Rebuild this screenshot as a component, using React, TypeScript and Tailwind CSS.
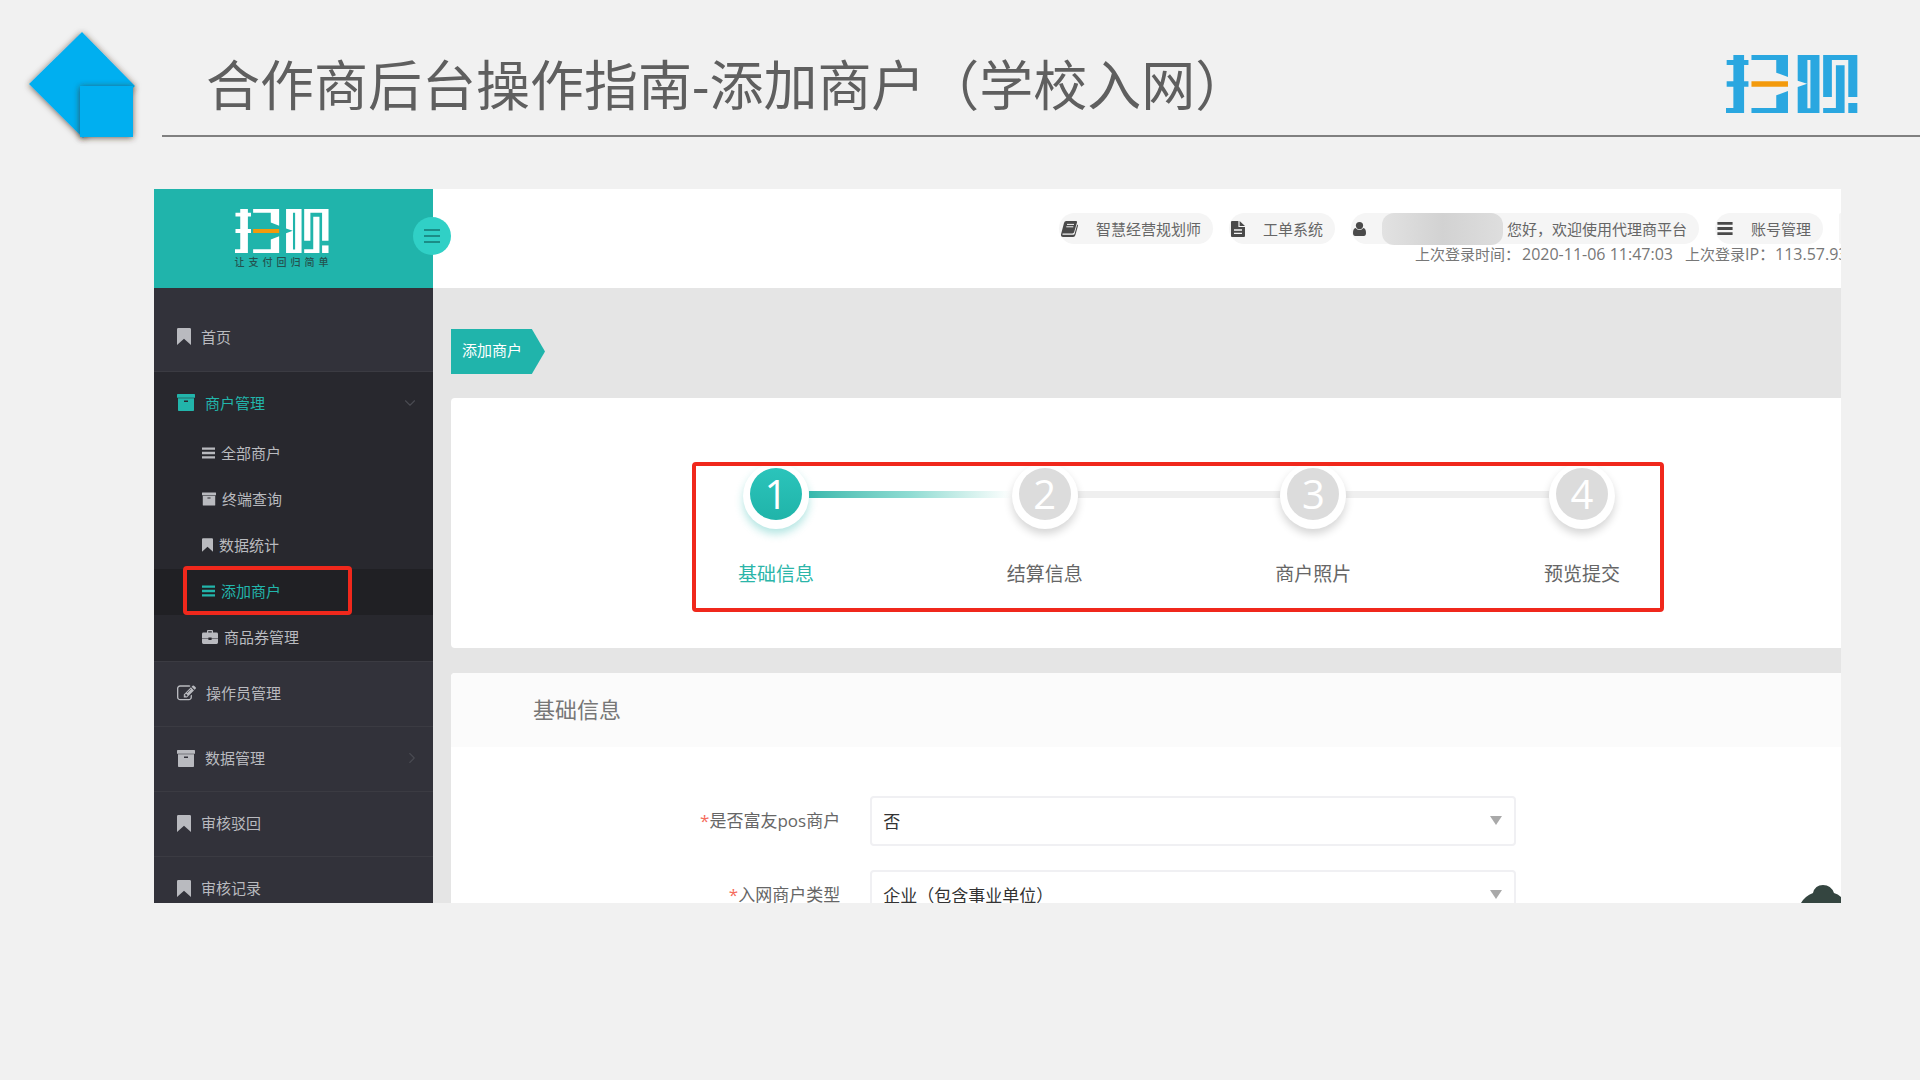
import { useState } from "react";
import type { ReactNode } from "react";
import { ChevronDown, ChevronRight } from "lucide-react";
import clsx from "clsx";

type IconProps = { className?: string };

function Logo({ className }: IconProps) {
  return (
    <svg viewBox="0 0 394 174" preserveAspectRatio="none" className={className} role="img" aria-label="扫呗">
      <g fill="currentColor">
        <path d="M22 0H54V15H67V30H54V79H67V95H54V174H0V159H22V95H2V79H22V30H2V15H22Z" />
        <path d="M76 0H185V66L150 53V15H76Z" />
        <path d="M185 108V174H76V159H150V121Z" />
        <path
          fillRule="evenodd"
          d="M214 0H279V174H214V96L242 86L214 77ZM243 15V160H252V15Z"
        />
        <path d="M290 0H392V126H365V15H316V126H290Z" />
        <path d="M328 31H354V174H290V159H328Z" />
        <path d="M365 144H392V174H365Z" />
      </g>
      <path fill="#f39a0c" d="M76 79H185V95H76Z" />
    </svg>
  );
}

function BookmarkIcon({ className }: IconProps) {
  return (
    <svg viewBox="0 0 14 17" fill="currentColor" className={className} aria-hidden="true">
      <path d="M1.3 0H12.7Q14 0 14 1.3V17L7 10.8L0 17V1.3Q0 0 1.3 0Z" />
    </svg>
  );
}

function ArchiveIcon({ className }: IconProps) {
  return (
    <svg viewBox="0 0 18 17" fill="currentColor" className={className} aria-hidden="true">
      <path d="M.6 0H17.4Q18 0 18 .6V3.8H0V.6Q0 0 .6 0Z" />
      <path
        fillRule="evenodd"
        d="M1 4.2H17V16.2Q17 17 16.2 17H1.8Q1 17 1 16.2ZM7 6.6V8H11V6.6Z"
      />
    </svg>
  );
}

function BarsIcon({ className }: IconProps) {
  return (
    <svg viewBox="0 0 14 12" fill="currentColor" className={className} aria-hidden="true">
      <path d="M0 0H14V2.6H0ZM0 4.7H14V7.3H0ZM0 9.4H14V12H0Z" />
    </svg>
  );
}

function BriefcaseIcon({ className }: IconProps) {
  return (
    <svg viewBox="0 0 16 14" fill="currentColor" className={className} aria-hidden="true">
      <path
        fillRule="evenodd"
        d="M5 2.6V1Q5 0 6 0H10Q11 0 11 1V2.6H14.6Q16 2.6 16 4V8.4H9.6V7.6H6.4V8.4H0V4Q0 2.6 1.4 2.6ZM6.2 1.2V2.6H9.8V1.2Z"
      />
      <path d="M0 9H6.4V10H9.6V9H16V12.6Q16 14 14.6 14H1.4Q0 14 0 12.6Z" />
    </svg>
  );
}

function EditIcon({ className }: IconProps) {
  return (
    <svg viewBox="0 128 1792 1450" fill="currentColor" className={className} aria-hidden="true">
      <path d="M888 1184l116-116-152-152-116 116v56h96v96h56zm440-720q-16-16-33 1l-350 350q-17 17-1 33t33-1l350-350q17-17 1-33zm80 594v190q0 119-84.5 203.5t-203.5 84.5h-832q-119 0-203.5-84.5t-84.5-203.5v-832q0-119 84.5-203.5t203.5-84.5h832q63 0 117 25 15 7 18 23 3 17-9 29l-49 49q-14 14-32 8-23-6-45-6h-832q-66 0-113 47t-47 113v832q0 66 47 113t113 47h832q66 0 113-47t47-113v-126q0-13 9-22l64-64q15-15 35-7t20 29zm-96-738l288 288-672 672h-288v-288zm444 132l-92 92-288-288 92-92q28-28 68-28t68 28l152 152q28 28 28 68t-28 68z" />
    </svg>
  );
}

function BookIcon({ className }: IconProps) {
  return (
    <svg viewBox="0 0 17 16" className={className} aria-hidden="true">
      <path fill="currentColor" d="M5.2 0H15Q16.4 0 16 1.5L13.2 11Q12.8 12.4 11.4 12.4H1.6Q1 13.8 2.2 13.8H12.4Q13.3 13.8 13.6 12.8L16.2 3.4Q17.2 3.8 16.9 5L14.4 14Q13.9 16 12.2 16H2.4Q-.6 16 .1 13L3 2Q3.5 0 5.2 0Z" />
      <path stroke="#f5f5f5" strokeWidth="1" d="M6 3.4H13M5.3 5.8H12.3" />
    </svg>
  );
}

function FileIcon({ className }: IconProps) {
  return (
    <svg viewBox="0 0 14 16" className={className} aria-hidden="true">
      <path fill="currentColor" d="M0 1Q0 0 1 0H7.4V6H14V15Q14 16 13 16H1Q0 16 0 15ZM8.6 0L14 4.9H8.6Z" />
      <path stroke="#f5f5f5" strokeWidth="1.3" d="M3 9H11M3 12.4H11" />
    </svg>
  );
}

function UserIcon({ className }: IconProps) {
  return (
    <svg viewBox="0 0 13 14" fill="currentColor" className={className} aria-hidden="true">
      <circle cx="6.5" cy="3.6" r="3.6" />
      <path d="M2.6 6Q4 8 6.5 8T10.4 6Q13 6.6 13 11Q13 14 10.8 14H2.2Q0 14 0 11Q0 6.6 2.6 6Z" />
    </svg>
  );
}

const SUB_MENU = [
  { label: "全部商户", icon: <BarsIcon className="h-3 w-[13px]" /> },
  { label: "终端查询", icon: <ArchiveIcon className="h-[14px] w-[14px]" /> },
  { label: "数据统计", icon: <BookmarkIcon className="h-[14px] w-[11px]" /> },
  { label: "添加商户", icon: <BarsIcon className="h-3 w-[13px]" />, marked: true },
  { label: "商品券管理", icon: <BriefcaseIcon className="h-[14px] w-4" /> },
];

const LOWER_MENU = [
  { label: "操作员管理", icon: <EditIcon className="h-4 w-[19px]" /> },
  { label: "数据管理", icon: <ArchiveIcon className="h-[17px] w-[18px]" />, arrow: true },
  { label: "审核驳回", icon: <BookmarkIcon className="h-[17px] w-[14px]" /> },
  { label: "审核记录", icon: <BookmarkIcon className="h-[17px] w-[14px]" /> },
];

const STEPS = ["基础信息", "结算信息", "商户照片", "预览提交"];

function Sidebar() {
  const [open, setOpen] = useState(true);

  return (
    <aside className="w-[279px] shrink-0 bg-[#32323a] text-[15px] leading-5 text-[#b9babf]">
      <div className="relative flex h-[99px] flex-col items-center bg-[#20b4ab] pt-5 pr-6">
        <Logo className="h-11 w-[94px] text-white" />
        <p className="mt-[3px] flex w-[94px] justify-between text-[10px] leading-3 font-medium text-[#24524f]">
          {[..."让支付回归简单"].map((char) => (
            <span key={char}>{char}</span>
          ))}
        </p>
        <button
          type="button"
          aria-label="收起菜单"
          className="absolute top-7 -right-[18px] z-10 flex size-[38px] items-center justify-center rounded-full bg-[#30d0c6] text-[#1b8d87]"
        >
          <svg viewBox="0 0 16 14" className="h-[14px] w-4" fill="currentColor" aria-hidden="true">
            <path d="M0 0H16V2H0ZM0 6H16V8H0ZM0 12H16V14H0Z" />
          </svg>
        </button>
      </div>

      <nav>
        <a href="#home" className="flex h-[84px] items-center gap-[10px] border-b border-[#3b3b42] pt-[14px] pl-[23px]">
          <BookmarkIcon className="h-[17px] w-[14px]" />
          首页
        </a>

        <div className="border-b border-[#3b3b42] bg-[#28282e]">
          <button
            type="button"
            onClick={() => setOpen((v) => !v)}
            aria-expanded={open}
            className="flex h-[59px] w-full items-center gap-[10px] pt-0.5 pr-[14px] pl-[23px] text-[#22b5ab]"
          >
            <ArchiveIcon className="h-[17px] w-[18px]" />
            商户管理
            <ChevronDown className="ml-auto size-[18px] text-[#4a4b52]" strokeWidth={1.5} />
          </button>
          {open &&
            SUB_MENU.map((item) => (
              <a
                key={item.label}
                href="#merchant"
                className={clsx(
                  "relative flex h-[46px] items-center gap-[6px] pb-0.5 pl-12",
                  item.marked && "bg-[#202024] text-[#22b5ab]",
                )}
              >
                {item.icon}
                {item.label}
                {item.marked && (
                  <span className="pointer-events-none absolute -top-[3px] left-[29px] h-[49px] w-[169px] rounded-[4px] border-4 border-[#f0281c]" />
                )}
              </a>
            ))}
        </div>

        {LOWER_MENU.map((item) => (
          <a
            key={item.label}
            href="#manage"
            className="flex h-[65px] items-center gap-[10px] border-b border-[#3b3b42] pr-3 pb-0.5 pl-[23px]"
          >
            {item.icon}
            {item.label}
            {item.arrow && <ChevronRight className="ml-auto size-[18px] text-[#4a4b52]" strokeWidth={1.5} />}
          </a>
        ))}
      </nav>
    </aside>
  );
}

function Pill({ icon, children }: { icon: ReactNode; children: ReactNode }) {
  return (
    <a
      href="#account"
      className="flex h-[31px] shrink-0 items-center gap-[18px] rounded-full bg-[#f5f5f5] pr-3 pl-0.5"
    >
      {icon}
      {children}
    </a>
  );
}

function TopBar() {
  return (
    <header className="flex h-[99px] flex-col items-end overflow-hidden bg-white pt-6 text-[15px] leading-5 text-[#666]">
      <div className="flex gap-4">
        <Pill icon={<BookIcon className="h-4 w-[17px] text-[#4a4a4a]" />}>智慧经营规划师</Pill>
        <Pill icon={<FileIcon className="h-4 w-[14px] text-[#4a4a4a]" />}>工单系统</Pill>
        <a href="#user" className="flex h-[31px] shrink-0 items-center rounded-full bg-[#f5f5f5] pr-3 pl-0.5">
          <UserIcon className="h-[14px] w-[13px] text-[#4a4a4a]" />
          <span className="mr-1 ml-4 h-8 w-[121px] rounded-xl bg-linear-to-r from-[#e2e2e2] via-[#d2d2d2] to-[#dedede]" />
          您好，欢迎使用代理商平台
        </a>
        <Pill icon={<BarsIcon className="h-[13px] w-4 text-[#4a4a4a]" />}>账号管理</Pill>
        <span className="h-[31px] w-0.5 rounded-l-full bg-[#f5f5f5]" />
      </div>
      <p className="flex w-[426px] overflow-hidden whitespace-nowrap text-[#777]">
        上次登录时间：<span className="mr-3 ml-0.5 text-base leading-5">2020-11-06 11:47:03</span>
        上次登录<span className="text-base leading-5">IP：113.57.93</span>
      </p>
    </header>
  );
}

function Stepper() {
  return (
    <section className="rounded-l bg-white pt-16 pr-[177px] pb-9 pl-[241px]">
      <ol className="flex h-[150px] justify-between overflow-hidden rounded-[4px] border-4 border-[#f0281c] pr-[34px] pl-9">
        {STEPS.map((step, i) => (
          <li
            key={step}
            className={clsx("flex items-start", i < STEPS.length - 1 && "flex-1")}
          >
            <div className="relative z-10 flex w-[88px] shrink-0 flex-col items-center">
              <span
                className={clsx(
                  "-mt-[3px] flex size-[66px] items-center justify-center rounded-full bg-white pb-1",
                  i === 0 ? "shadow-[0_5px_8px_#20b4ab55]" : "shadow-[0_5px_8px_#0000002a]",
                )}
              >
                <span
                  className={clsx(
                    "flex size-[52px] items-center justify-center rounded-full text-[40px] leading-none font-medium text-white",
                    i === 0 ? "bg-linear-to-b from-[#2bc4bb] to-[#20b4a9]" : "bg-[#dcdcdc]",
                  )}
                >
                  {i + 1}
                </span>
              </span>
              <span
                className={clsx(
                  "mt-[31px] text-[19px] leading-7 whitespace-nowrap",
                  i === 0 ? "text-[#2bb5a9]" : "text-[#666]",
                )}
              >
                {step}
              </span>
            </div>
            {i < STEPS.length - 1 && (
              <span
                className={clsx(
                  "-mx-[11px] mt-[25px] h-[7px] flex-1",
                  i === 0 ? "bg-linear-to-r from-[#37b9ad] via-[#8fdcd3] to-white" : "bg-[#efefef]",
                )}
              />
            )}
          </li>
        ))}
      </ol>
    </section>
  );
}

function SelectRow({ id, label, options }: { id: string; label: string; options: string[] }) {
  return (
    <div className="flex items-center text-[17px]">
      <label htmlFor={id} className="w-[28%] text-right text-[#666]">
        <span className="text-[#f56c5c]">*</span>
        {label}
      </label>
      <div className="relative mr-[325px] ml-[30px] flex-1">
        <select
          id={id}
          className="h-[50px] w-full appearance-none rounded-[4px] border-2 border-[#f0f0f3] bg-white pt-0.5 pl-[11px] text-[#333]"
        >
          {options.map((option) => (
            <option key={option}>{option}</option>
          ))}
        </select>
        <svg
          viewBox="0 0 12 9"
          fill="#a9a9a9"
          className="pointer-events-none absolute top-5 right-[14px] h-[9px] w-3"
          aria-hidden="true"
        >
          <path d="M0 0H12L6 9Z" />
        </svg>
      </div>
    </div>
  );
}

function BasicInfoForm() {
  return (
    <section className="rounded-l bg-white">
      <h2 className="flex h-[74px] items-center rounded-tl bg-[#fbfbfb] pb-0.5 pl-[82px] text-[22px] text-[#777]">
        基础信息
      </h2>
      <form className="flex flex-col gap-6 pt-[49px]">
        <SelectRow id="fuyou" label="是否富友pos商户" options={["否", "是"]} />
        <SelectRow id="merchant-type" label="入网商户类型" options={["企业（包含事业单位）"]} />
      </form>
    </section>
  );
}

export default function App() {
  return (
    <div className="flex h-screen flex-col overflow-hidden bg-[#f1f1f1] font-['Open_Sans','Noto_Sans_CJK_SC',sans-serif]">
      <div className="flex h-[137px] shrink-0">
        <svg viewBox="0 0 162 150" className="h-[150px] w-[162px] shrink-0" aria-hidden="true">
          <defs>
            <filter id="soft" x="-20%" y="-20%" width="140%" height="140%">
              <feDropShadow dx="0" dy="1" stdDeviation="3" floodColor="#3a2a1a" floodOpacity="0.7" />
            </filter>
          </defs>
          <path d="M82 32L135 86L83 138L29 84Z" fill="#00aff0" filter="url(#soft)" />
          <path d="M80 86H133V137H80Z" fill="#00aff0" filter="url(#soft)" />
        </svg>
        <div className="flex flex-1 items-center justify-between border-b-2 border-[#808080] pt-8 pr-[62px] pl-11">
          <h1 className="pt-0.5 text-[54px] leading-none whitespace-nowrap text-[#5f5f5f]">
            合作商后台操作指南-添加商户（学校入网）
          </h1>
          <Logo className="h-[58px] w-[132px] text-[#2aa7e0]" />
        </div>
      </div>

      <div className="relative mt-[52px] mr-[79px] mb-[177px] ml-[154px] flex min-h-0 flex-1 overflow-hidden">
        <Sidebar />
        <div className="min-w-0 flex-1 bg-[#e5e5e5]">
          <TopBar />
          <main className="pl-[18px]">
            <div className="pt-[41px] pb-6">
              <div className="flex h-[45px] w-[94px] items-center bg-[#20b4ab] pb-0.5 pl-[11px] text-[15px] text-white [clip-path:polygon(0_0,86%_0,100%_50%,86%_100%,0_100%)]">
                添加商户
              </div>
            </div>
            <Stepper />
            <div className="h-[25px]" />
            <BasicInfoForm />
          </main>
        </div>
        <svg viewBox="0 0 40 18" fill="#344540" className="absolute right-0 bottom-0 h-[18px] w-10" aria-hidden="true">
          <path d="M0 18Q4 11 12 8Q14 0 22 0T33 8Q37 9 40 12V18Z" />
        </svg>
      </div>
    </div>
  );
}
